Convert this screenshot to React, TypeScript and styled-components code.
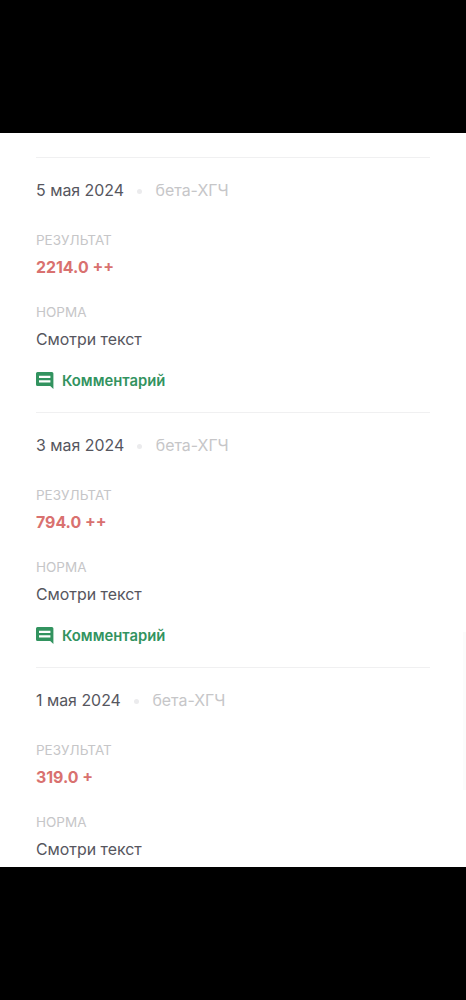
import React from 'react';
import styled, { createGlobalStyle } from 'styled-components';

const Global = createGlobalStyle`
  * { box-sizing: border-box; }
  body { margin: 0; background: #000; font-family: Inter, "Noto Sans", sans-serif; }
`;
const Screen = styled.div`
  height: 1000px; padding: 133px 0; background: #000;
`;
const Viewport = styled.main`
  position: relative; height: 734px; overflow: hidden; background: #fff; padding: 24px 36px 0 36px;
`;
const Entry = styled.article`
  height: 255px; border-top: 1px solid #f0f0f1; padding-top: 21px; color: #56565e;
`;
const Heading = styled.header`
  display: flex; align-items: center; height: 24px; font-size: 15.92px; line-height: 24px; white-space: nowrap;
`;
const Dot = styled.span`
  width: 5px; height: 5px; border-radius: 50%; background: #ebebed; margin: 0 13.5px 0 13px;
`;
const Test = styled.span`color: #c6c6c8;`;
const Label = styled.div`
  font-size: 13.5px; line-height: 18px; color: #c6c6c8; text-transform: uppercase;
`;
const Field = styled.div<{ $gap: number }>`margin-top: ${p => p.$gap}px;`;
const Value = styled.div<{ $alert?: boolean }>`
  margin-top: 7px; font-size: 15.9px; line-height: 24px;
  font-weight: ${p => (p.$alert ? 700 : 400)};
  color: ${p => (p.$alert ? '#d9716f' : '#56565e')};
`;
const Comment = styled.button`
  display: flex; align-items: center; gap: 8px; margin: 17px 0 0; padding: 0; border: 0; background: none;
  font: 600 14.8px/24px Inter, "Noto Sans", sans-serif; color: #32935f;
`;
const Scrollbar = styled.div`
  position: absolute; right: 0; top: 499px; width: 3px; height: 158px; background: #fbfbfb;
`;

const results = [
  { date: '5 мая 2024', value: '2214.0 ++', comment: true },
  { date: '3 мая 2024', value: '794.0 ++', comment: true },
  { date: '1 мая 2024', value: '319.0 +', comment: false },
];

export default function App() {
  return (
    <Screen>
      <Global />
      <Viewport>
        {results.map(r => (
          <Entry key={r.date}>
            <Heading><span>{r.date}</span><Dot /><Test>бета-ХГЧ</Test></Heading>
            <Field $gap={28}><Label>Результат</Label><Value $alert>{r.value}</Value></Field>
            <Field $gap={23}><Label>Норма</Label><Value>Смотри текст</Value></Field>
            {r.comment && (
              <Comment>
                <svg width="18" height="18" viewBox="0 0 18 18" fill="currentColor">
                  <path fillRule="evenodd" d="M1.5 0h14.4a1.5 1.5 0 0 1 1.5 1.5V17L14.2 14H1.5A1.5 1.5 0 0 1 0 12.5V1.5A1.5 1.5 0 0 1 1.5 0ZM3 3.8v2.3h11.4V3.8ZM3 8.2v2.3h11.4V8.2Z" />
                </svg>
                Комментарий
              </Comment>
            )}
          </Entry>
        ))}
        <Scrollbar />
      </Viewport>
    </Screen>
  );
}
